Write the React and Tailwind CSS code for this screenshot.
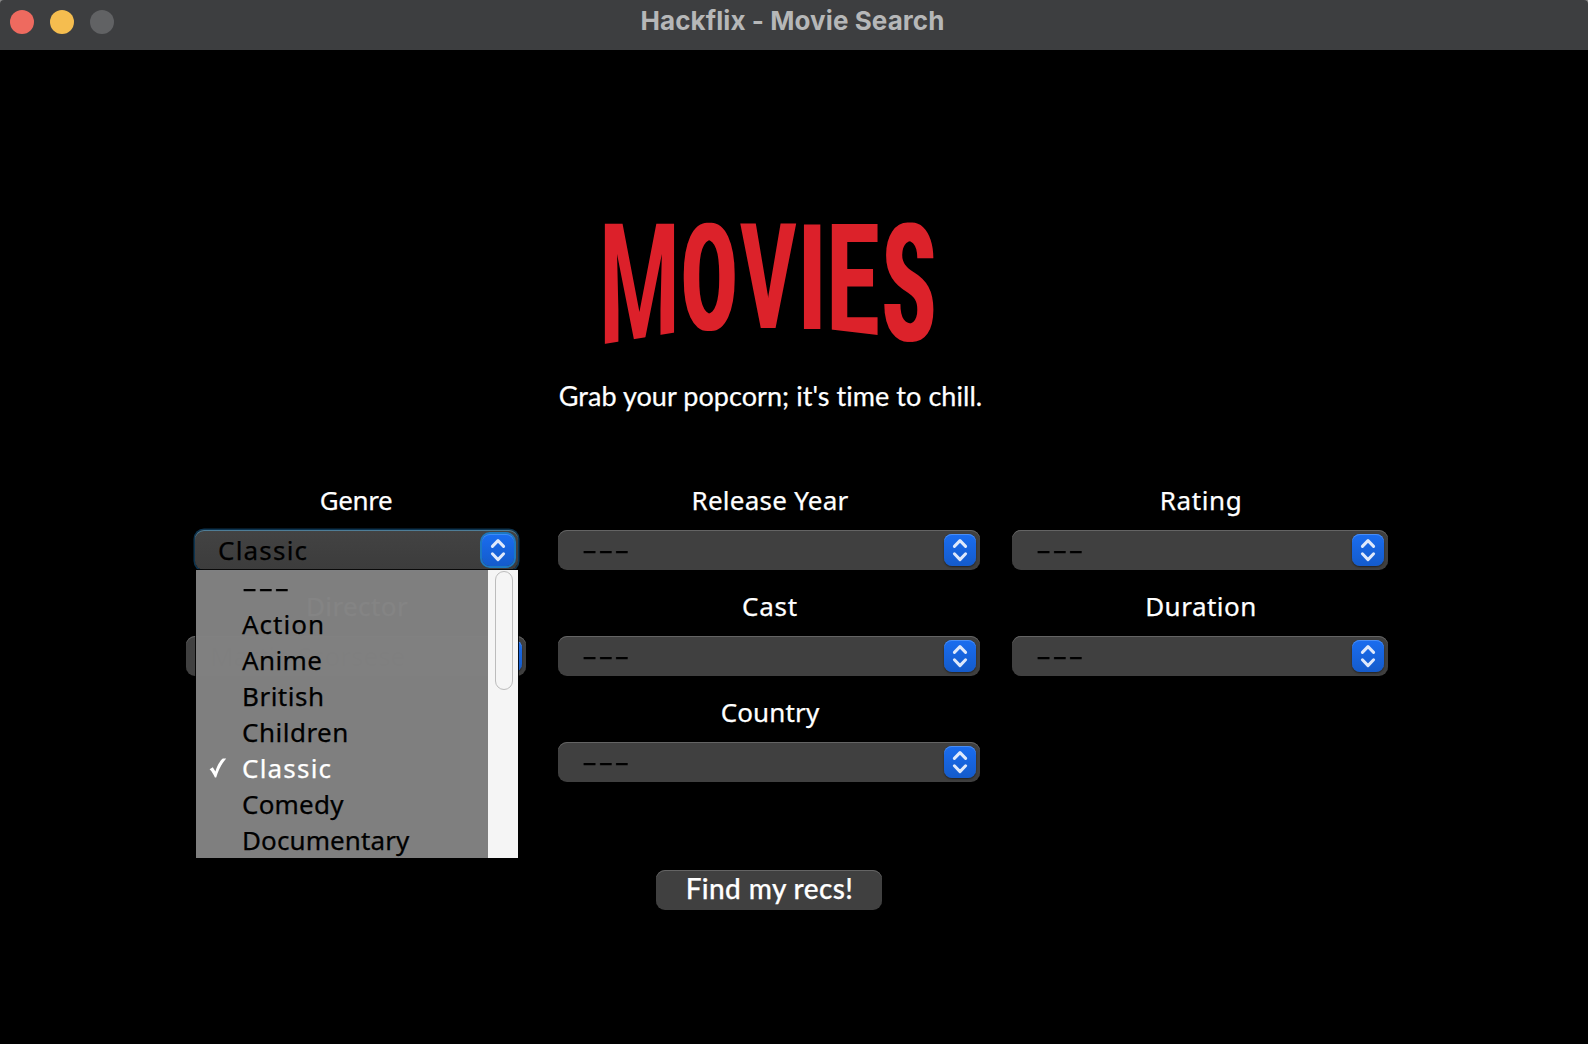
import React from 'react';

const GENRES = [
  ['---', ''],
  ['Action', 'tracking-[1px]'],
  ['Anime', 'tracking-[0.4px]'],
  ['British', 'tracking-[0.5px]'],
  ['Children', 'tracking-[0.5px]'],
  ['Classic', 'tracking-[1.2px]'],
  ['Comedy', 'tracking-[0.2px]'],
  ['Documentary', 'tracking-[0.1px]'],
];

function Dashes() {
  return <span className="relative -top-px inline-block origin-left scale-x-[1.8] tracking-[0.6px]">---</span>;
}

function Logo() {
  return (
    <svg
      width="360"
      height="150"
      viewBox="0 0 360 150"
      fill="#dc202a"
      fontFamily="Roboto, sans-serif"
      fontWeight="700"
      fontSize="100"
      className="ml-[590px] block"
    >
      <defs>
        <filter id="widen" x="-5%" y="-5%" width="110%" height="110%">
          <feMorphology operator="dilate" radius="1 0" />
        </filter>
        <filter id="widen-more" x="-5%" y="-5%" width="110%" height="110%">
          <feMorphology operator="dilate" radius="2 0" />
        </filter>
        <clipPath id="arc-left">
          <polygon points="0,0 88,0 88,122 14,134 0,136" />
        </clipPath>
        <clipPath id="arc-right">
          <polygon points="235,0 292,0 292,125.5 241,119.5 235,119" />
        </clipPath>
      </defs>
      <g clipPath="url(#arc-left)">
        <text transform="translate(9 134) scale(0.925 1.695)">M</text>
      </g>
      <g filter="url(#widen-more)">
        <text transform="translate(92.6 120.2) scale(0.775 1.485)">O</text>
      </g>
      <g filter="url(#widen)">
        <text transform="translate(151 118) scale(0.833 1.47)">V</text>
      </g>
      <text transform="translate(205.7 119) scale(1.12 1.47)">I</text>
      <g clipPath="url(#arc-right)">
        <g filter="url(#widen)">
          <text transform="translate(237 125) scale(0.917 1.568)">E</text>
        </g>
      </g>
      <g filter="url(#widen-more)">
        <text transform="translate(293.4 130.4) scale(0.825 1.625)">S</text>
      </g>
    </svg>
  );
}

function Stepper({ focused }) {
  return (
    <span
      className={
        'flex size-8 shrink-0 items-center justify-center rounded-[8px] bg-gradient-to-b from-[#1a6df0] to-[#145bcb] ' +
        (focused
          ? 'shadow-[0_0_0_2px_#1c78c0,inset_0_1px_0_#3d8cf5]'
          : 'shadow-[0_1px_2px_rgba(0,0,0,0.5),inset_0_1px_0_#4a8ef5]')
      }
    >
      <svg width="32" height="32" viewBox="0 0 32 32" fill="none" stroke="#dfe9fb" strokeWidth="3" strokeLinecap="round" strokeLinejoin="round">
        <path d="M10.4 12.4L16 6.6L21.6 12.4M10.4 19.8L16 25.6L21.6 19.8" />
      </svg>
    </span>
  );
}

function Select({ children }) {
  return (
    <div className="mt-[10px] flex h-10 items-center justify-between rounded-[9px] bg-[#404040] pr-1 pl-6 leading-10 text-black shadow-[inset_0_1px_0_#646464]">
      <span>{children}</span>
      <Stepper />
    </div>
  );
}

function Field({ label, spacing, value }) {
  return (
    <div>
      <div className={'pl-[2px] text-center leading-10 ' + spacing}>{label}</div>
      <Select>{value ?? <Dashes />}</Select>
    </div>
  );
}

function GenreMenu() {
  return (
    <div className="absolute top-[90px] left-[10px] z-10 flex h-72 w-[322px] bg-[rgba(130,130,130,0.975)] shadow-[0_0_0_1px_rgba(0,0,0,0.85)]">
      <ul className="w-[292px] text-black">
        {GENRES.map(([name, spacing]) => (
          <li key={name} className={'flex h-9 items-center leading-9 ' + spacing + (name === 'Classic' ? ' text-white' : '')}>
            <span className="w-[46px] shrink-0 pl-[13px]">
              {name === 'Classic' && (
                <svg width="18" height="22" viewBox="0 0 18 22" fill="currentColor">
                  <path d="M0.6 12.2L3.8 10.2L6.4 14.6C8.2 8.6 10.8 3.8 13.8 1.4L17.2 1.4C12.8 6.4 9.4 12.8 7.2 20.6L5.9 20.6C4.6 17.4 3 14.6 0.6 12.2Z" />
                </svg>
              )}
            </span>
            {name === '---' ? <Dashes /> : <span>{name}</span>}
          </li>
        ))}
      </ul>
      <div className="flex-1 bg-[rgba(248,248,248,0.975)] pt-px pl-[7px]">
        <div className="h-[119px] w-[18px] rounded-full border border-[#bcbcbc] bg-[#f5f5f5]/50" />
      </div>
    </div>
  );
}

export default function App() {
  return (
    <div className="h-[1044px] w-[1588px] overflow-hidden bg-black font-['Noto_Sans',sans-serif] text-[26px] text-white">
      <div className="bg-[#8a8a8a]">
        <header className="flex h-[50px] rounded-t-[4px] bg-[#3d3e40]">
          <div className="flex w-[124px] gap-4 pt-[10px] pl-[10px]">
            <span className="size-6 rounded-full bg-[#ee6a5f]" />
            <span className="size-6 rounded-full bg-[#f5bd4f]" />
            <span className="size-6 rounded-full bg-[#616264]" />
          </div>
          <h1 className="flex-1 pr-[127px] text-center font-['Inter',sans-serif] text-[26px] leading-[41px] font-bold tracking-[0.08px] text-[#b6b7b8]">
            Hackflix - Movie Search
          </h1>
        </header>
      </div>

      <main className="flex flex-col pt-40 [-webkit-text-stroke:0.25px_currentColor]">
        <div className="[-webkit-text-stroke:0]">
          <Logo />
        </div>
        <p className="mt-4 w-[1541px] text-center font-['Lato',sans-serif] text-[27px] leading-10 tracking-[0.06px] [font-variant-ligatures:none]">
          Grab your popcorn; it's time to chill.
        </p>

        <div className="mt-16 ml-[186px] grid grid-cols-[340px_422px_376px] gap-x-8 gap-y-4">
          <div className="relative">
            <div className="text-center leading-10 tracking-[-0.4px]">Genre</div>
            <div className="mr-2 ml-[9px] mt-[10px] flex h-10 items-center justify-between rounded-[9px] bg-gradient-to-b from-[#434343] to-[#3c3c3c] pr-1 pl-[23px] leading-10 text-black shadow-[0_0_0_1.5px_#0d3450,inset_0_1px_0_#4f7d96]">
              <span className="tracking-[1.2px]">Classic</span>
              <Stepper focused />
            </div>
            <GenreMenu />
          </div>
          <Field label="Release Year" spacing="tracking-[0.25px]" />
          <Field label="Rating" spacing="tracking-[0.6px]" />
          <Field
            label="Director"
            spacing="tracking-[0.4px] text-[#c4c4c4]"
            value={<span className="text-[#1c1c1c]">Martin Scorsese</span>}
          />
          <Field label="Cast" spacing="tracking-[0.8px]" />
          <Field label="Duration" spacing="tracking-[0.5px]" />
          <div className="col-start-2">
            <Field label="Country" spacing="tracking-[0.15px]" />
          </div>
        </div>

        <button className="mt-[88px] ml-[656px] h-10 w-[226px] rounded-[9px] bg-[#404040] pb-[4px] pl-[1px] font-['Lato',sans-serif] text-[28px] leading-[36px] font-medium tracking-[0.4px] shadow-[inset_0_1px_0_#646464] [font-variant-ligatures:none]">
          Find my recs!
        </button>
      </main>
    </div>
  );
}
